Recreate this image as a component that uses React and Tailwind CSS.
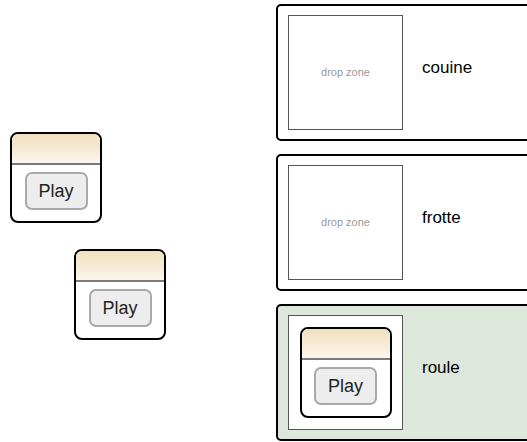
import React from "react";

const font = { fontFamily: '"Liberation Sans", Arial, sans-serif' };

const Widget = ({ className = "" }) => (
  <div
    className={`w-[92px] h-[91px] rounded-[8px] border-2 border-black bg-white overflow-hidden flex flex-col ${className}`}
  >
    <div className="h-[31px] bg-gradient-to-b from-[#f2dfbd] to-[#fbf6ee] border-b-2 border-[#7a7a7a]" />
    <div className="flex-1 flex items-start justify-center pt-[7px]">
      <button className="w-[63px] h-[38px] rounded-[7px] border-2 border-[#a9a9a9] bg-[#ededed] text-[18px] text-[#222] leading-none">
        Play
      </button>
    </div>
  </div>
);

const Card = ({ label, green, children }) => (
  <div
    className={`w-[280px] h-[137px] rounded-[5px] border-2 border-black flex items-center p-[9px] pl-[10px] ${
      green ? "bg-[#dde7dc]" : "bg-white"
    }`}
  >
    <div className="w-[115px] h-[115px] shrink-0 border border-[#555] bg-white flex items-center justify-center">
      {children || <span className="text-[11px] text-[#999]">drop zone</span>}
    </div>
    <span className="ml-[19px] mb-[9px] text-[17px] text-black">{label}</span>
  </div>
);

export default function App() {
  return (
    <div className="relative w-[527px] h-[442px] overflow-hidden bg-white" style={font}>
      {/* free draggables */}
      <Widget className="absolute left-[10px] top-[132px]" />
      <Widget className="absolute left-[74px] top-[249px]" />

      <div className="absolute left-[276px] top-[4px] flex flex-col gap-[13px]">
        <Card label="couine" />
        <Card label="frotte" />
        <Card label="roule" green>
          <Widget />
        </Card>
      </div>
    </div>
  );
}
